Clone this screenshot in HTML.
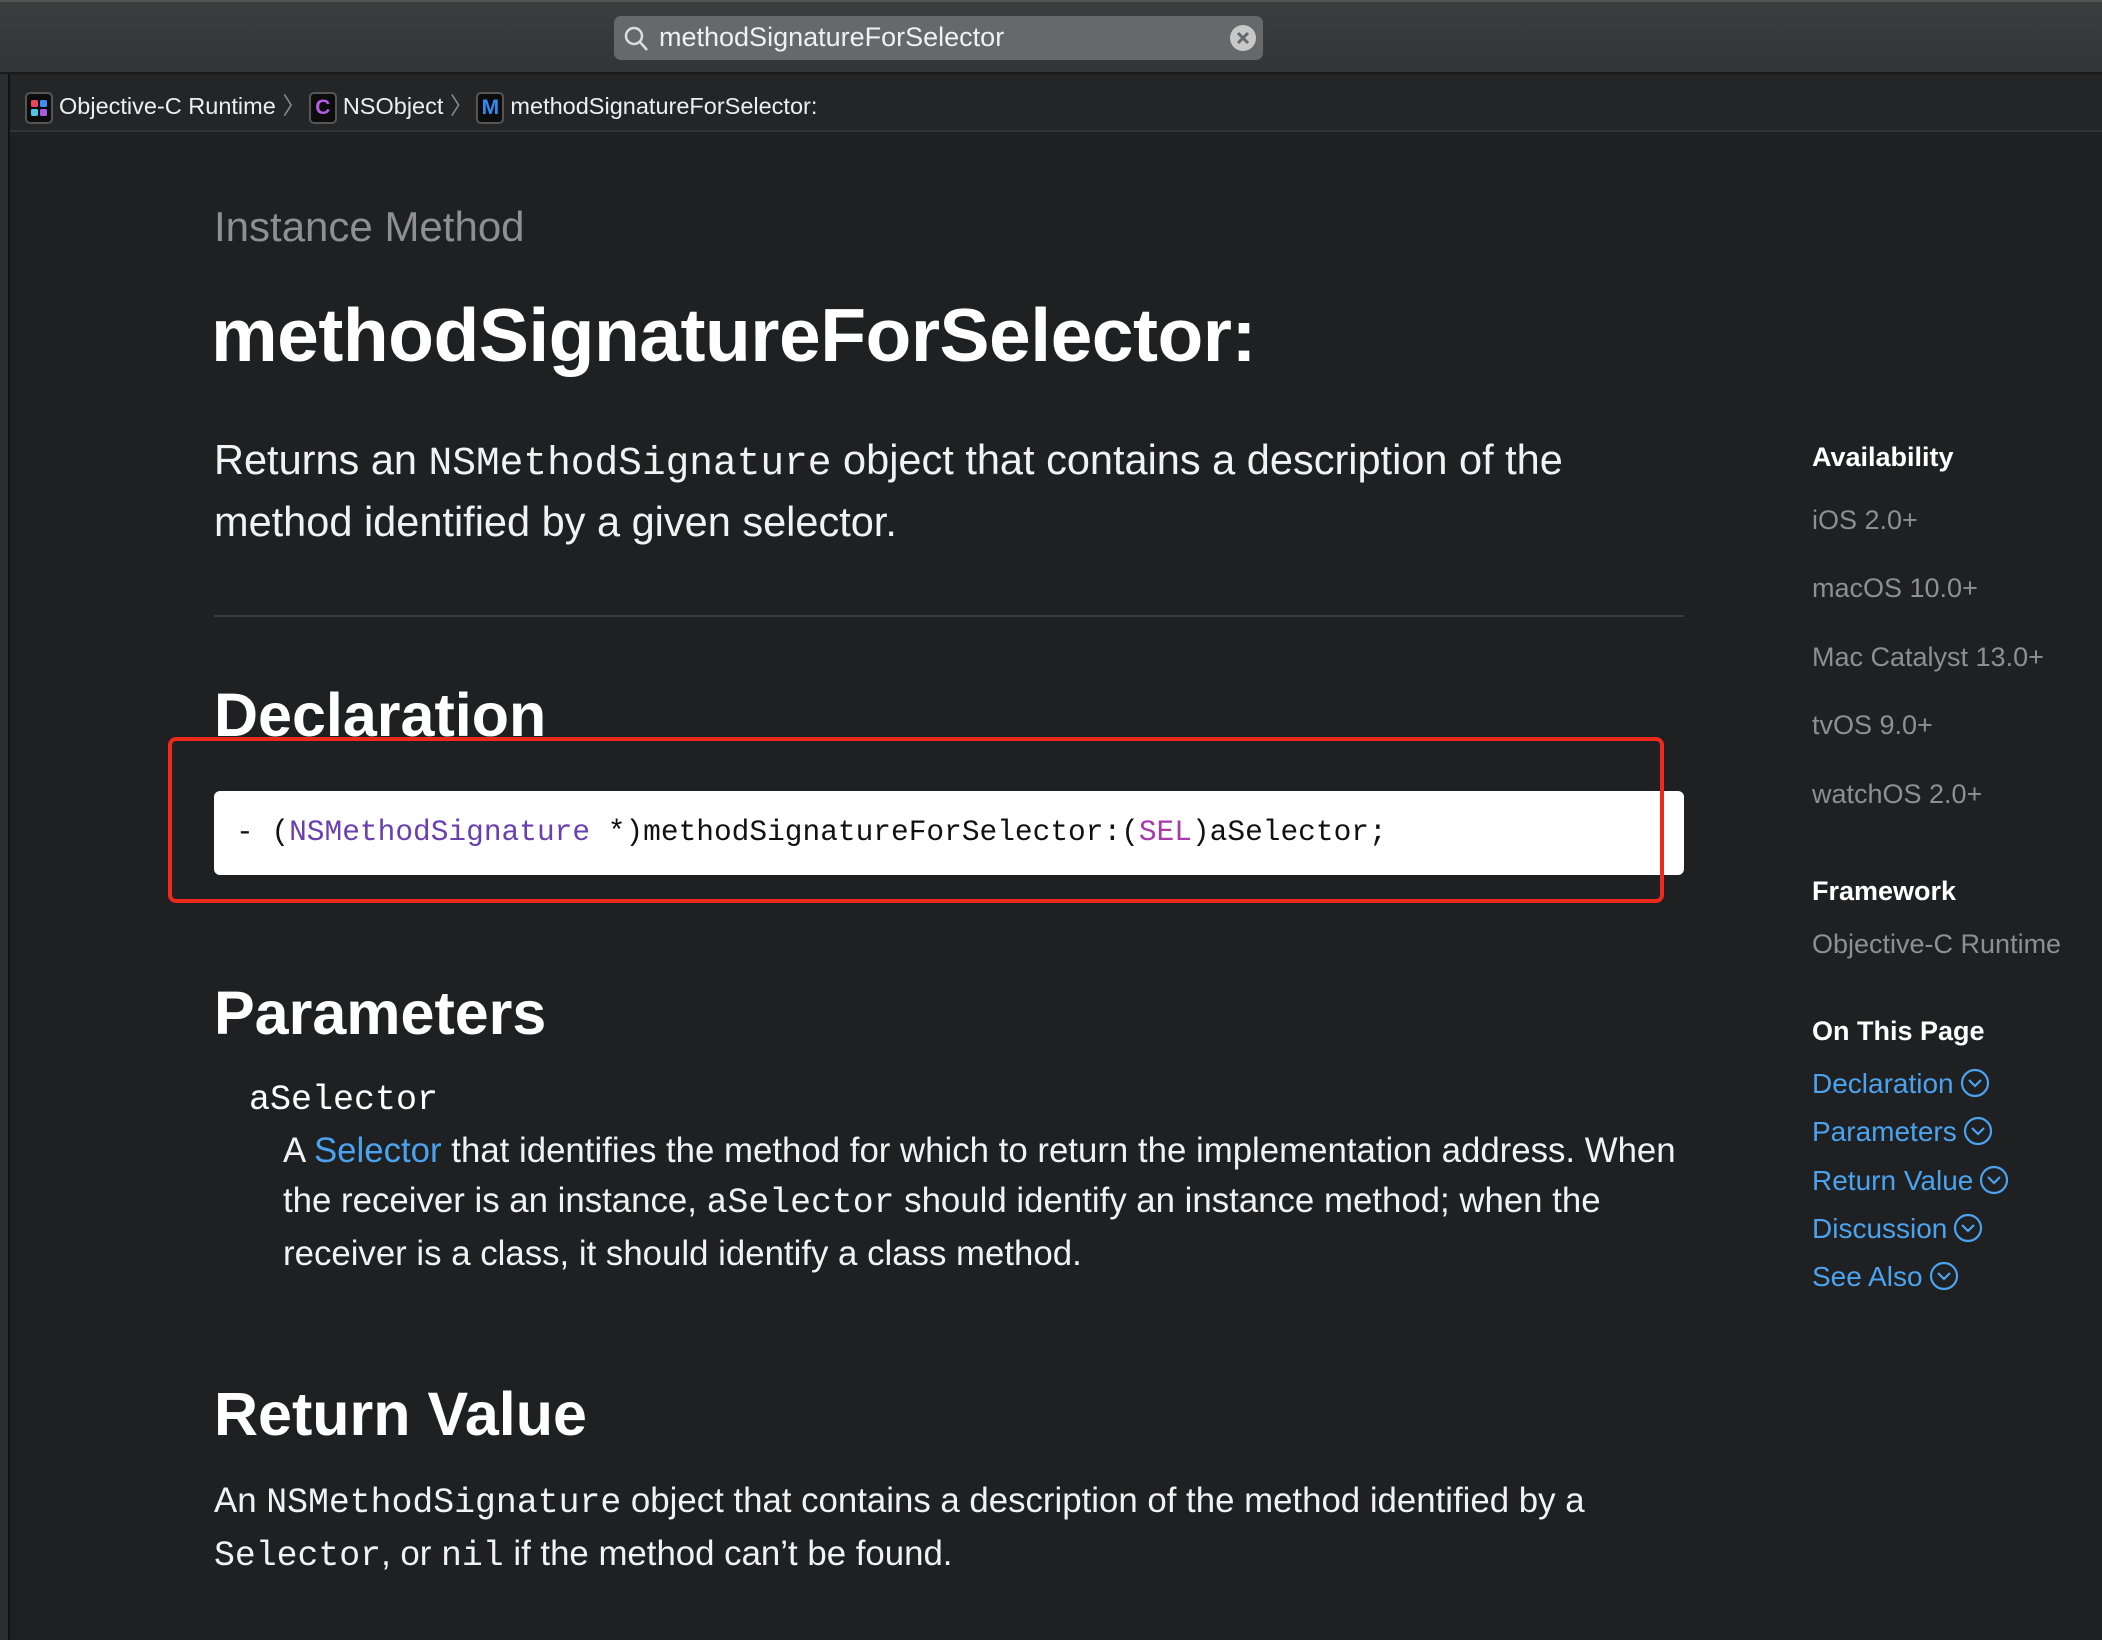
<!DOCTYPE html>
<html><head><meta charset="utf-8"><style>
*{margin:0;padding:0;box-sizing:border-box}
body{width:2102px;height:1640px;background:#1f2022;font-family:"Liberation Sans",sans-serif;position:relative;overflow:hidden;color:#fff}
.abs{position:absolute;white-space:nowrap}
.mono{font-family:"Liberation Mono",monospace}
.top{left:0;top:0;width:2102px;height:74px;background:linear-gradient(#3c3d3f,#333436);border-bottom:2px solid #1a1a1a;border-top:2px solid #555}
.search{left:614px;top:16px;width:649px;height:44px;background:#67686a;border-radius:7px}
.crumb{left:10px;top:75px;width:2092px;height:57px;background:#242527;border-bottom:2px solid #333}
.strip{left:0;top:74px;width:10px;height:1566px;background:#2b2d30;border-right:2px solid #111}
.ico{display:inline-block;width:28px;height:32px;border:2px solid #555;border-radius:5px;background:#0c0c0c;vertical-align:middle;text-align:center;font-size:21px;line-height:28px;font-weight:bold;margin:0 6px 0 3px}
.side{left:1812px;font-size:27px;color:#8e8e93}
.sh{left:1812px;font-size:27px;font-weight:bold;color:#fff}
.lk{left:1812px;font-size:28px;color:#4ba3ef}
.lk svg{vertical-align:-5px;margin-left:6px}
h2{position:absolute;left:214px;font-size:61px;font-weight:bold;white-space:nowrap;color:#fff}
.p{font-size:34.8px;color:#f2f2f2}
</style></head><body>
<div class="abs top"></div>
<div class="abs search"></div>
<svg class="abs" style="left:622px;top:24px" width="28" height="30" viewBox="0 0 28 30"><circle cx="12" cy="12" r="8" fill="none" stroke="#ddd" stroke-width="2.5"/><line x1="18" y1="18" x2="25" y2="26" stroke="#ddd" stroke-width="2.5"/></svg>
<div class="abs" style="left:659px;top:22px;font-size:27px;color:#f0f0f0">methodSignatureForSelector</div>
<svg class="abs" style="left:1229px;top:24px" width="28" height="28"><circle cx="14" cy="14" r="13" fill="#c8c8c8"/><path d="M9 9L19 19M19 9L9 19" stroke="#67686a" stroke-width="3"/></svg>
<div class="abs strip"></div>
<div class="abs crumb"></div>
<div class="abs" style="left:22px;top:87px;font-size:23.5px;color:#eee">
<span class="ico" style="position:relative"><svg width="24" height="28" style="position:absolute;left:0;top:0"><rect x="4" y="6" width="7" height="7" rx="1.5" fill="#e8455a"/><rect x="13" y="6" width="7" height="7" rx="1.5" fill="#3d8df5"/><rect x="4" y="15" width="7" height="7" rx="1.5" fill="#4cc6e0"/><rect x="13" y="15" width="7" height="7" rx="1.5" fill="#a35be0"/></svg></span>Objective-C Runtime <span style="color:#888">〉</span><span class="ico" style="color:#b35de6">C</span>NSObject <span style="color:#888">〉</span><span class="ico" style="color:#2f8cf4">M</span>methodSignatureForSelector:</div>

<div class="abs" style="left:214px;top:203px;font-size:42px;color:#8e8e93">Instance Method</div>
<div class="abs" style="left:211px;top:292px;font-size:75px;font-weight:bold;letter-spacing:-0.5px">methodSignatureForSelector:</div>
<div class="abs" style="left:214px;top:431px;font-size:41.5px;line-height:58px;color:#f2f2f2">Returns an <span class="mono" style="font-size:39.5px">NSMethodSignature</span> object that contains a description of the<br>method identified by a given selector.</div>
<div class="abs" style="left:214px;top:615px;width:1470px;height:2px;background:#3a3b3d"></div>

<div class="abs" style="left:214px;top:680px;height:58px;overflow:hidden"><h2 style="position:static">Declaration</h2></div>
<div class="abs" style="left:214px;top:791px;width:1470px;height:84px;background:#fff;border-radius:6px"></div>
<div class="abs mono" style="left:236px;top:815px;font-size:29.5px;color:#111">- (<span style="color:#6a3fb0">NSMethodSignature</span> *)methodSignatureForSelector:(<span style="color:#a53aa8">SEL</span>)aSelector;</div>
<div class="abs" style="left:168px;top:737px;width:1496px;height:166px;border:4px solid #f0291e;border-radius:8px"></div>

<h2 style="top:978px">Parameters</h2>
<div class="abs mono" style="left:249px;top:1080px;font-size:35px">aSelector</div>
<div class="abs p" style="left:283px;top:1126px;line-height:50px">A <span style="color:#4ba3ef">Selector</span> that identifies the method for which to return the implementation address. When<br>the receiver is an instance, <span class="mono">aSelector</span> should identify an instance method; when the<br>receiver is a class, it should identify a class method.</div>

<h2 style="top:1379px">Return Value</h2>
<div class="abs p" style="left:214px;top:1476px;line-height:50px">An <span class="mono">NSMethodSignature</span> object that contains a description of the method identified by a<br><span class="mono">Selector</span>, or <span class="mono">nil</span> if the method can’t be found.</div>

<div class="abs sh" style="top:442px">Availability</div>
<div class="abs side" style="top:505px">iOS 2.0+</div>
<div class="abs side" style="top:573px">macOS 10.0+</div>
<div class="abs side" style="top:642px">Mac Catalyst 13.0+</div>
<div class="abs side" style="top:710px">tvOS 9.0+</div>
<div class="abs side" style="top:779px">watchOS 2.0+</div>
<div class="abs sh" style="top:876px">Framework</div>
<div class="abs side" style="top:929px">Objective-C Runtime</div>
<div class="abs sh" style="top:1016px">On This Page</div>
<div class="abs lk" style="top:1068px">Declaration<svg width="30" height="30"><circle cx="15" cy="15" r="13" fill="none" stroke="#4ba3ef" stroke-width="2.2"/><path d="M9 12l6 6 6-6" fill="none" stroke="#4ba3ef" stroke-width="2.2"/></svg></div>
<div class="abs lk" style="top:1116px">Parameters<svg width="30" height="30"><circle cx="15" cy="15" r="13" fill="none" stroke="#4ba3ef" stroke-width="2.2"/><path d="M9 12l6 6 6-6" fill="none" stroke="#4ba3ef" stroke-width="2.2"/></svg></div>
<div class="abs lk" style="top:1165px">Return Value<svg width="30" height="30"><circle cx="15" cy="15" r="13" fill="none" stroke="#4ba3ef" stroke-width="2.2"/><path d="M9 12l6 6 6-6" fill="none" stroke="#4ba3ef" stroke-width="2.2"/></svg></div>
<div class="abs lk" style="top:1213px">Discussion<svg width="30" height="30"><circle cx="15" cy="15" r="13" fill="none" stroke="#4ba3ef" stroke-width="2.2"/><path d="M9 12l6 6 6-6" fill="none" stroke="#4ba3ef" stroke-width="2.2"/></svg></div>
<div class="abs lk" style="top:1261px">See Also<svg width="30" height="30"><circle cx="15" cy="15" r="13" fill="none" stroke="#4ba3ef" stroke-width="2.2"/><path d="M9 12l6 6 6-6" fill="none" stroke="#4ba3ef" stroke-width="2.2"/></svg></div>
</body></html>
